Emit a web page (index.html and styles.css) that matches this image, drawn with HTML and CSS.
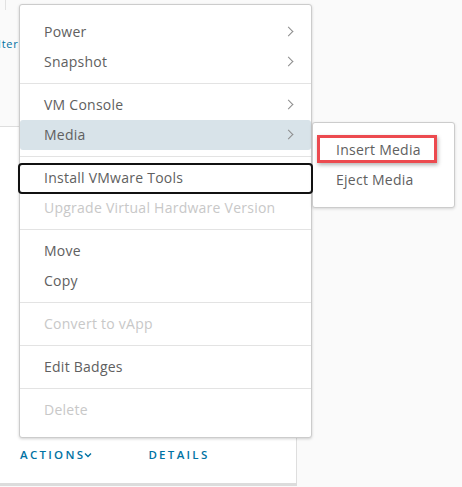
FILE: index.html
```html
<!DOCTYPE html>
<html>
<head>
<meta charset="utf-8">
<link rel="stylesheet" href="styles.css">
</head>
<body>
<div class="page">
  <div class="top">
    <div class="vline"></div>
    <span class="filter">Filter</span>
  </div>
  <div class="card">
    <div class="card-footer">
      <span class="link">ACTIONS<svg class="caret" width="8" height="6" viewBox="0 0 8 6"><path d="M1 1.5 L4 4.5 L7 1.5" fill="none" stroke="#0072a3" stroke-width="1.4"/></svg></span>
      <span class="link details">DETAILS</span>
    </div>
  </div>

  <div class="menu">
    <div class="item">Power<span class="chev"></span></div>
    <div class="item">Snapshot<span class="chev"></span></div>
    <div class="sep"></div>
    <div class="item">VM Console<span class="chev"></span></div>
    <div class="item active">Media<span class="chev"></span>
      <div class="submenu">
        <div class="item highlight">Insert Media</div>
        <div class="item">Eject Media</div>
      </div>
    </div>
    <div class="sep"></div>
    <div class="item focused">Install VMware Tools</div>
    <div class="item disabled">Upgrade Virtual Hardware Version</div>
    <div class="sep"></div>
    <div class="item">Move</div>
    <div class="item">Copy</div>
    <div class="sep"></div>
    <div class="item disabled">Convert to vApp</div>
    <div class="sep"></div>
    <div class="item">Edit Badges</div>
    <div class="sep"></div>
    <div class="item disabled">Delete</div>
  </div>
</div>
</body>
</html>
```
FILE: styles.css
```css
html, body {
  margin: 0;
  padding: 0;
  background: #fafafa;
  font-family: "Open Sans", Lato, sans-serif;
}
.page {
  position: relative;
  width: 462px;
  height: 487px;
  overflow: hidden;
}
.top {
  height: 126px;
  position: relative;
}
.vline {
  position: absolute;
  left: 5px;
  top: 0;
  width: 1px;
  height: 10px;
  background: #e2e2e2;
}
.filter {
  position: absolute;
  left: -12px;
  top: 36px;
  font-size: 11px;
  letter-spacing: 0.8px;
  color: #0072a3;
}
.card {
  width: 297px;
  height: 357px;
  background: #fff;
  border-top: 1px solid #dedede;
  border-right: 1px solid #dedede;
  box-sizing: border-box;
  box-shadow: 0 3px 0 #dcdcdc;
  display: flex;
  flex-direction: column;
  justify-content: flex-end;
}
.card-footer {
  display: flex;
  align-items: center;
  padding: 0 0 21px 20px;
  gap: 56px;
}
.link {
  font-size: 11.5px;
  font-weight: 600;
  letter-spacing: 2.3px;
  color: #0072a3;
  display: inline-flex;
  align-items: center;
}
.caret {
  margin-left: -1px;
}
.menu {
  position: absolute;
  left: 19px;
  top: 4px;
  width: 293px;
  box-sizing: border-box;
  background: #fff;
  border: 1px solid #cccccc;
  border-radius: 3px;
  box-shadow: 0 1px 3px rgba(0, 0, 0, 0.18);
  padding: 12px 0;
}
.item {
  position: relative;
  height: 30px;
  line-height: 30px;
  padding-left: 24px;
  font-size: 14px;
  letter-spacing: 0.25px;
  color: #606060;
  white-space: nowrap;
}
.item.active {
  background: #d8e3e9;
  border-radius: 3px;
}
.item.disabled {
  color: #c8c8c8;
}
.item.focused::after {
  content: "";
  position: absolute;
  left: -2px;
  right: -2px;
  top: 0;
  bottom: -1px;
  border: 2px solid #111;
  border-radius: 4px;
}
.chev {
  position: absolute;
  right: 19px;
  top: 11px;
  width: 6px;
  height: 6px;
  border-top: 1px solid #8c8c8c;
  border-right: 1px solid #8c8c8c;
  transform: rotate(45deg);
}
.sep {
  height: 1px;
  background: #e3e3e3;
  margin: 6px 0;
}
.submenu {
  position: absolute;
  left: 292px;
  top: 2px;
  width: 143px;
  box-sizing: border-box;
  background: #fff;
  border: 1px solid #cccccc;
  border-radius: 3px;
  box-shadow: 0 1px 3px rgba(0, 0, 0, 0.15);
  padding: 12px 0;
}
.submenu .item {
  padding-left: 23px;
}
.item.highlight::after {
  content: "";
  position: absolute;
  left: 4px;
  top: 0;
  width: 120px;
  height: 28px;
  box-sizing: border-box;
  border: 3px solid #ec4a4f;
  box-shadow: 1px 2px 4px rgba(0, 0, 0, 0.3);
}
```
